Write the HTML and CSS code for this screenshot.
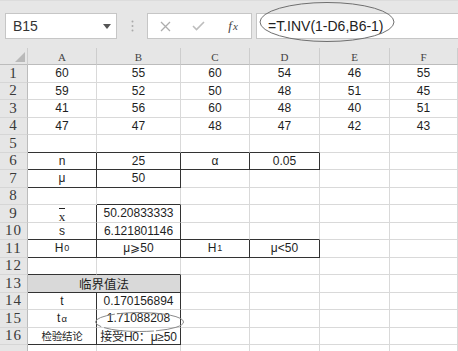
FILE: index.html
```html
<!DOCTYPE html>
<html lang="zh-CN">
<head>
    <meta charset="UTF-8">
    <title>T.INV</title>
    <link rel="stylesheet" href="styles.css">
</head>
<body>
<div class="page">
    <div class="toolbar">
        <div class="namebox">
            <span>B15</span>
            <svg class="caret" width="8" height="5" viewBox="0 0 8 5"><polygon points="0,0 8,0 4,5" fill="#555"/></svg>
        </div>
        <div class="grip">
            <svg width="3" height="12" viewBox="0 0 3 12"><circle cx="1.5" cy="1.5" r="1" fill="#aaa"/><circle cx="1.5" cy="6" r="1" fill="#aaa"/><circle cx="1.5" cy="10.5" r="1" fill="#aaa"/></svg>
        </div>
        <div class="fbtns">
            <span class="fbtn">
                <svg width="11" height="11" viewBox="0 0 11 11"><path d="M1 1L10 10M10 1L1 10" stroke="#adadad" stroke-width="1.3"/></svg>
            </span>
            <span class="fbtn">
                <svg width="13" height="10" viewBox="0 0 13 10"><path d="M1 5L4.5 8.5L12 1" stroke="#bdbdbd" stroke-width="1.6" fill="none"/></svg>
            </span>
            <span class="fbtn fx">f<i>x</i></span>
        </div>
        <div class="finput">=T.INV(1-D6,B6-1)</div>
    </div>

    <div class="sheet">
        <!-- header -->
        <div class="hd corner"><svg width="10" height="10" viewBox="0 0 10 10"><polygon points="10,0 10,10 0,10" fill="#b9b9b9"/></svg></div>
        <div class="hd">A</div><div class="hd">B</div><div class="hd">C</div><div class="hd">D</div><div class="hd">E</div><div class="hd">F</div>

        <div class="rh">1</div><div class="c">60</div><div class="c">55</div><div class="c">60</div><div class="c">54</div><div class="c">46</div><div class="c">55</div>
        <div class="rh">2</div><div class="c">59</div><div class="c">52</div><div class="c">50</div><div class="c">48</div><div class="c">51</div><div class="c">45</div>
        <div class="rh">3</div><div class="c">41</div><div class="c">56</div><div class="c">60</div><div class="c">48</div><div class="c">40</div><div class="c">51</div>
        <div class="rh">4</div><div class="c">47</div><div class="c">47</div><div class="c">48</div><div class="c">47</div><div class="c">42</div><div class="c">43</div>
        <div class="rh">5</div><div class="c db"></div><div class="c db"></div><div class="c db"></div><div class="c db"></div><div class="c"></div><div class="c"></div>

        <div class="rh">6</div><div class="c dr db">n</div><div class="c dr db">25</div><div class="c dr db">α</div><div class="c dr db">0.05</div><div class="c"></div><div class="c"></div>
        <div class="rh">7</div><div class="c dr db">μ</div><div class="c dr db">50</div><div class="c"></div><div class="c"></div><div class="c"></div><div class="c"></div>
        <div class="rh">8</div><div class="c"></div><div class="c db"></div><div class="c"></div><div class="c"></div><div class="c"></div><div class="c"></div>
        <div class="rh">9</div><div class="c dr"><span class="xbar">x</span></div><div class="c dr">50.20833333</div><div class="c"></div><div class="c"></div><div class="c"></div><div class="c"></div>
        <div class="rh">10</div><div class="c dr db">s</div><div class="c dr db">6.121801146</div><div class="c db"></div><div class="c db"></div><div class="c"></div><div class="c"></div>
        <div class="rh">11</div><div class="c dr db">H<sub>0</sub></div><div class="c dr db">μ⩾50</div><div class="c dr db">H<sub>1</sub></div><div class="c dr db">μ&lt;50</div><div class="c"></div><div class="c"></div>
        <div class="rh">12</div><div class="c db"></div><div class="c db"></div><div class="c"></div><div class="c"></div><div class="c"></div><div class="c"></div>

        <div class="rh">13</div><div class="c dr db title">临界值法</div><div class="c"></div><div class="c"></div><div class="c"></div><div class="c"></div>
        <div class="rh">14</div><div class="c dr">t</div><div class="c dr">0.170156894</div><div class="c"></div><div class="c"></div><div class="c"></div><div class="c"></div>
        <div class="rh">15</div><div class="c dr">t<sub class="alpha">α</sub></div><div class="c dr">1.71088208</div><div class="c"></div><div class="c"></div><div class="c"></div><div class="c"></div>
        <div class="rh">16</div><div class="c dr db cjk small">检验结论</div><div class="c dr db cjk">接受H0：μ≥50</div><div class="c"></div><div class="c"></div><div class="c"></div><div class="c"></div>
        <div class="rh"></div><div class="c"></div><div class="c"></div><div class="c"></div><div class="c"></div><div class="c"></div><div class="c"></div>
    </div>

    <!-- hand drawn rings over the picture -->
    <svg class="ring ring-formula" width="140" height="44" viewBox="0 0 140 44"><ellipse cx="69" cy="21" rx="67" ry="19.5" fill="none" stroke="#6f6f6f" stroke-width="1"/></svg>
    <svg class="ring ring-cell" width="92" height="22" viewBox="0 0 92 22"><ellipse cx="45.5" cy="11" rx="44" ry="9.5" fill="none" stroke="#8a8a8a" stroke-width="1" stroke-dasharray="30 2 50 3"/></svg>
</div>
</body>
</html>
```

FILE: styles.css
```css
body {
    margin: 0;
    padding: 0;
    width: 458px;
    height: 351px;
    overflow: hidden;
    background-color: #e6e6e6;
    font-family: "Liberation Sans", Arial, sans-serif;
}

.page {
    position: relative;
    width: 458px;
    height: 351px;
    overflow: hidden;
}

/* formula bar */
.toolbar {
    height: 48px;
    box-sizing: border-box;
    padding-top: 12px;
    display: flex;
    align-items: flex-start;
    border-top: 1px solid #dcdcdc;
}

.namebox {
    margin-left: 5px;
    width: 112px;
    height: 26px;
    box-sizing: border-box;
    background: white;
    border: 1px solid #c6c6c6;
    display: flex;
    align-items: center;
    justify-content: space-between;
    padding: 0 5px 0 7px;
    font-size: 14px;
    color: #333;
}

.grip {
    width: 30px;
    height: 26px;
    display: flex;
    align-items: center;
    justify-content: center;
}

.fbtns {
    width: 105px;
    height: 26px;
    box-sizing: border-box;
    background: white;
    border: 1px solid #c6c6c6;
    display: flex;
    align-items: center;
    padding-left: 1px;
}

.fbtn {
    width: 34px;
    display: flex;
    justify-content: center;
    align-items: center;
}

.fx {
    width: 37px;
    font-family: "Liberation Serif", serif;
    font-style: italic;
    font-size: 13px;
    color: #444;
}

.fx i {
    font-size: 11px;
    margin-left: 1px;
}

.finput {
    margin-left: 4px;
    flex: 1;
    height: 26px;
    box-sizing: border-box;
    background: white;
    border: 1px solid #c6c6c6;
    border-right: none;
    padding-left: 11px;
    font-size: 14px;
    line-height: 24px;
    color: #222;
}

/* sheet grid */
.sheet {
    display: grid;
    grid-template-columns: 28px 69px 84px 69px 70px 70px 68px;
    grid-template-rows: 17px repeat(17, 17.5px);
    background: white;
}

.hd {
    background-color: #e6e6e6;
    border-right: 1px solid #cdcdcd;
    border-bottom: 1px solid #bcbcbc;
    display: flex;
    align-items: center;
    justify-content: center;
    font-family: "Liberation Serif", serif;
    font-size: 11px;
    color: #444;
    padding-top: 2px;
    box-sizing: border-box;
}

.corner {
    align-items: flex-end;
    justify-content: flex-end;
    padding: 0 2px 2px 0;
}

.rh {
    background-color: #e6e6e6;
    border-right: 1px solid #bcbcbc;
    border-bottom: 1px solid #d6d6d6;
    display: flex;
    align-items: center;
    justify-content: center;
    font-family: "Liberation Serif", serif;
    font-size: 15px;
    letter-spacing: 1px;
    color: #3a3a3a;
    box-sizing: border-box;
}

.c {
    border-right: 1px solid #d9d9d9;
    border-bottom: 1px solid #d9d9d9;
    box-sizing: border-box;
    display: flex;
    align-items: center;
    justify-content: center;
    white-space: nowrap;
    font-size: 12px;
    color: #1e1e1e;
}

.dr {
    border-right-color: #333;
}

.db {
    border-bottom-color: #333;
}

.title {
    grid-column: span 2;
    background-color: #d9d9d9;
    font-family: "Noto Sans CJK SC", sans-serif;
    font-size: 12.5px;
}

.cjk {
    font-family: "Liberation Sans", "Noto Sans CJK SC", sans-serif;
    font-size: 12px;
    letter-spacing: -0.2px;
}

.cjk.small {
    font-family: "Noto Sans CJK SC", sans-serif;
    font-size: 10.5px;
}

sub {
    font-size: 9px;
    vertical-align: -2px;
    margin-left: 1px;
}

.alpha {
    font-size: 9.5px;
}

.xbar {
    display: inline-block;
    font-family: "Liberation Serif", serif;
    font-size: 13px;
    line-height: 9px;
    padding-top: 3px;
    margin-top: 2px;
    border-top: 1px solid #222;
}

/* rings */
.ring {
    position: absolute;
}

.ring-formula {
    left: 258px;
    top: 1px;
}

.ring-cell {
    left: 94px;
    top: 311px;
}
```
